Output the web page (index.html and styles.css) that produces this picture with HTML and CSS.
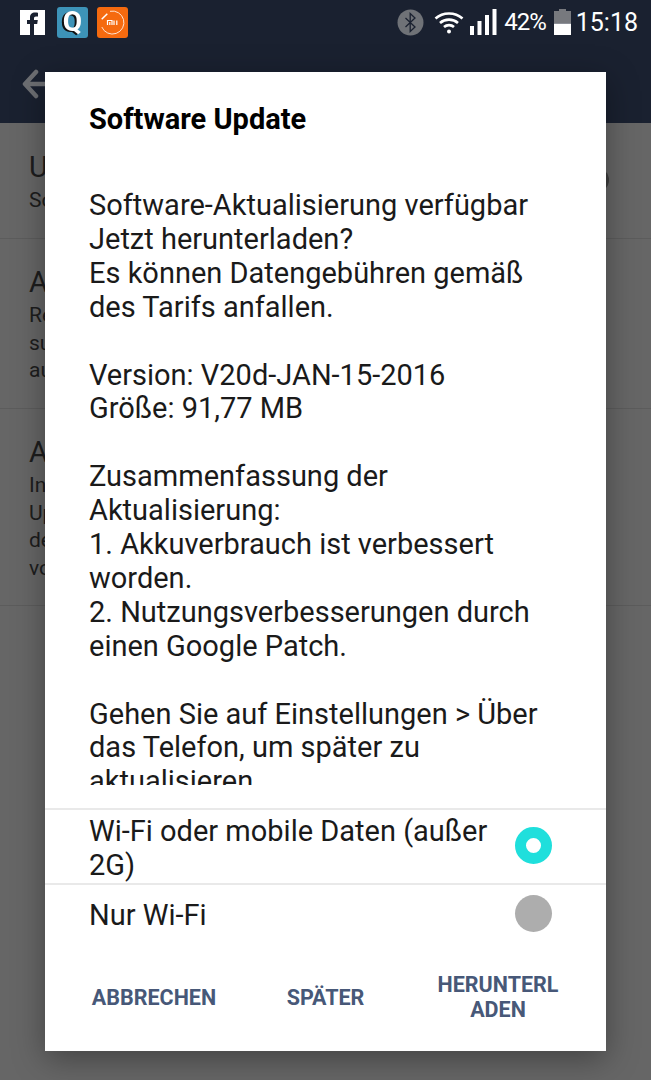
FILE: index.html
```html
<!DOCTYPE html>
<html lang="de">
<head>
<meta charset="utf-8">
<title>Software Update</title>
<link rel="stylesheet" href="styles.css">
</head>
<body>
<div class="screen">
  <header class="appbar">
    <div class="status">
      <div class="notif">
        <svg class="ic-fb" width="25" height="25" viewBox="0 0 25 25"><rect width="25" height="25" fill="#fff"/><path d="M10 25V14H7v-4h3V7.500C10 4 12 2.500 15 2.500c1.300 0 2.500.1 3 .2V6.500h-2c-1.500 0-2 .7-2 2V10h3.800l-.6 4H14v11z" fill="#1a2130"/></svg>
        <svg class="ic-q" width="31" height="31" viewBox="0 0 31 31"><rect width="31" height="31" rx="3" fill="#3d93b8"/><text class="q-glyph" x="15.500" y="24" text-anchor="middle">Q</text></svg>
        <svg class="ic-mi" width="31" height="31" viewBox="0 0 31 31"><rect width="31" height="31" rx="3" fill="#f56a0f"/><path d="M13 4.300A11.500 11.500 0 1 1 4.800 20" fill="none" stroke="#ffe3d0" stroke-width="1"/><path d="M4.700 12.300l5.600-5.600" stroke="#fff" stroke-width="1.500"/><path d="M10.500 18v-4.500h4.500V18M12.800 15v3M17 13.500V18M19.800 13.500V18" fill="none" stroke="#fff" stroke-width="1.200"/></svg>
      </div>
      <div class="sys">
        <svg class="ic-bt" width="27" height="27" viewBox="0 0 27 27"><circle cx="13.500" cy="13.500" r="13" fill="#6f7277"/><path d="M8.500 9l9.500 9-4.800 4.500V4.500L18 9l-9.500 9" fill="none" stroke="#1a2130" stroke-width="1.300"/></svg>
        <svg class="ic-wifi" width="30" height="23" viewBox="0 0 30 23"><path d="M1.500 7.500C9 .8 21 .8 28.500 7.500M6 12c5-4.500 13-4.500 18 0M10 16c2.800-2.500 7.200-2.500 10 0" fill="none" stroke="#fff" stroke-width="2.600"/><circle cx="15" cy="20.500" r="2" fill="#fff"/></svg>
        <svg class="ic-sig" width="27" height="26" viewBox="0 0 27 26"><path d="M0 17h4v9H0zM7.500 12h4v14h-4zM15 6h4v20h-4zM22.500 0h4v26h-4z" fill="#fff"/></svg>
        <span class="pct">42%</span>
        <svg class="ic-bat" width="17" height="26" viewBox="0 0 17 26"><path d="M5 0h7v2h5v12H0V2h5z" fill="#77797e"/><rect y="14.500" width="17" height="11.500" fill="#fff"/></svg>
        <span class="time">15:18</span>
      </div>
    </div>
    <div class="nav">
      <svg class="back" width="28" height="30" viewBox="0 0 28 30"><path d="M14 3L3 15l11 12M4 15h24" fill="none" stroke="#6d6f73" stroke-width="4.500" stroke-linecap="round" stroke-linejoin="round"/></svg>
    </div>
  </header>

  <main class="settings">
    <section class="item item-1">
      <h2 class="item-title">Update</h2>
      <p class="item-text">Software</p>
    </section>
    <section class="item item-2">
      <h2 class="item-title">Automatisch</h2>
      <p class="item-text">Regelmäßig<br>suchen<br>auf</p>
    </section>
    <section class="item item-3">
      <h2 class="item-title">Automatisch</h2>
      <p class="item-text">Installiert<br>Updates<br>der<br>von</p>
    </section>
    <span class="switch"></span>
  </main>

  <div class="dialog">
    <h1 class="title">Software Update</h1>
    <div class="message">
      <p>Software-Aktualisierung verfügbar<br>Jetzt herunterladen?<br>Es können Datengebühren gemäß<br>des Tarifs anfallen.</p>
      <p>Version: V20d-JAN-15-2016<br>Größe: 91,77 MB</p>
      <p>Zusammenfassung der<br>Aktualisierung:<br>1. Akkuverbrauch ist verbessert<br>worden.<br>2. Nutzungsverbesserungen durch<br>einen Google Patch.</p>
      <p>Gehen Sie auf Einstellungen &gt; Über<br>das Telefon, um später zu<br>aktualisieren</p>
    </div>
    <div class="options">
      <div class="option option-a">
        <span class="option-label">Wi-Fi oder mobile Daten (außer 2G)</span>
        <span class="radio radio-on"></span>
      </div>
      <div class="option option-b">
        <span class="option-label">Nur Wi-Fi</span>
        <span class="radio radio-off"></span>
      </div>
    </div>
    <div class="actions">
      <button class="action act-1">ABBRECHEN</button>
      <button class="action act-2">SPÄTER</button>
      <button class="action act-3">HERUNTERL<br>ADEN</button>
    </div>
  </div>
</div>
</body>
</html>
```
FILE: styles.css
```css
* { box-sizing: border-box; }
html, body { margin: 0; padding: 0; }
body { font-family: Roboto, "Liberation Sans", sans-serif; }
.screen { position: relative; width: 651px; height: 1080px; overflow: hidden; background: #666; }
.appbar { height: 123px; background: #1a2130; }
.status { display: flex; justify-content: space-between; align-items: center; height: 44px; padding: 0 13px 0 20px; }
.notif, .sys { display: flex; align-items: center; }
.notif { gap: 12px; }
.ic-mi { margin-left: -3px; }
.q-glyph { font-family: Roboto, sans-serif; font-size: 28px; font-weight: 700; fill: #fff; filter: drop-shadow(-1.500px 1px 0 #111); }
.ic-bt { margin-right: 10px; }
.ic-wifi { margin-right: 6px; }
.ic-sig { margin-right: 7px; }
.pct { color: #fff; font-size: 24px; letter-spacing: -1px; margin-right: 8px; }
.ic-bat { margin-right: 5px; }
.time { color: #fff; font-size: 25px; }
.nav { display: flex; align-items: center; height: 79px; padding: 0 0 0 22px; }
.settings { position: relative; color: #1d1d1d; }
.item { border-bottom: 1px solid #5c5c5c; padding-left: 29px; overflow: hidden; }
.item-1 { height: 116px; padding-top: 27px; }
.item-2 { height: 170px; padding-top: 26px; }
.item-3 { height: 197px; padding-top: 26px; }
.item-title { margin: 0; font-weight: 400; font-size: 29px; line-height: 34px; }
.item-text { margin: 3px 0 0; font-size: 21px; line-height: 27.500px; }
.switch { position: absolute; right: 42px; top: 45px; width: 24px; height: 24px; border-radius: 50%; background: #3e3e3e; }
.dialog { position: absolute; left: 45px; top: 72px; width: 561px; height: 979px; background: #fff; color: #1a1a1a; box-shadow: 0 8px 30px rgba(0,0,0,.35); display: flex; flex-direction: column; }
.title { margin: 0; padding: 30px 44px 0; height: 112px; font-size: 29px; line-height: 34px; font-weight: 700; color: #000; }
.message { height: 601px; padding: 5px 44px 0; overflow: hidden; font-size: 29px; line-height: 33.900px; flex: none; }
.message p { margin: 0 0 33.900px; }
.options { margin-top: 23px; }
.option { display: flex; align-items: center; justify-content: space-between; border-top: 2px solid #e9e9e9; padding: 0 54px 0 44px; font-size: 29px; line-height: 34px; }
.option-a { height: 75px; }
.option-b { height: 60px; }
.option-label { width: 410px; padding-top: 2px; }
.radio { flex: none; width: 37px; height: 37px; border-radius: 50%; margin-top: -2px; }
.radio-on { background: #fff; border: 11px solid #1fdfdc; }
.radio-off { background: #adadad; }
.actions { flex: 1; display: grid; grid-template-columns: 190px 153px 1fr; align-items: center; padding: 0 12px 0 14px; }
.action { border: 0; background: none; padding: 0; font-family: inherit; font-size: 21.500px; line-height: 25px; font-weight: 700; color: #475878; text-align: center; }
```
